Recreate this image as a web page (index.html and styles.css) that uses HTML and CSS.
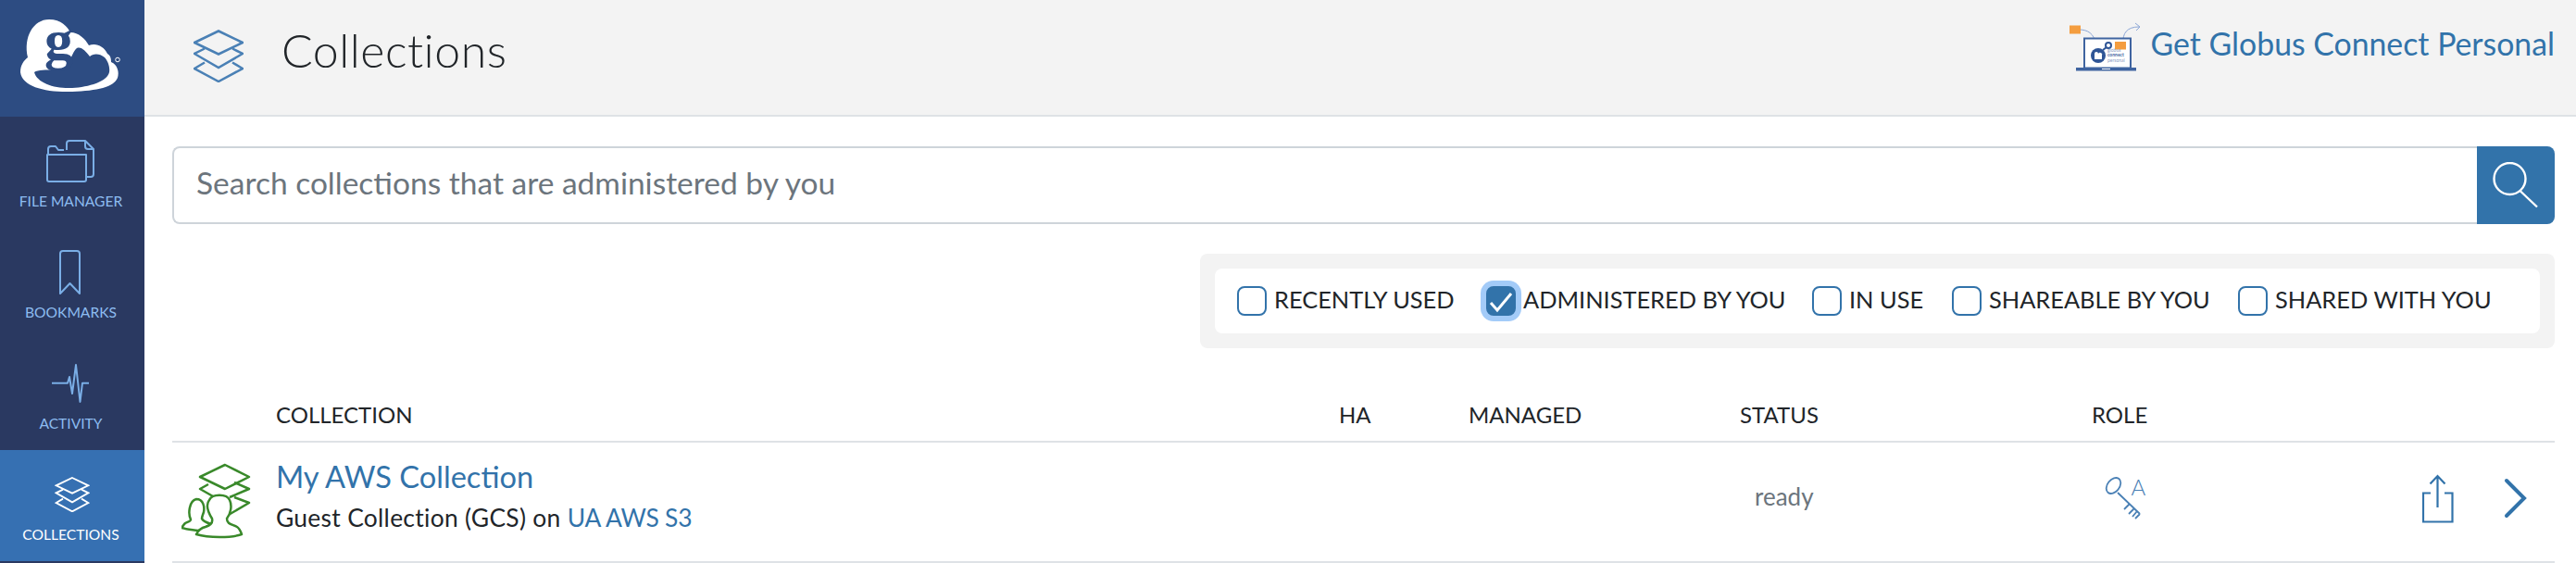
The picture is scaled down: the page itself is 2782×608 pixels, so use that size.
FILE: index.html
```html
<!DOCTYPE html>
<html lang="en">
<head>
<meta charset="utf-8">
<title>Collections</title>
<link rel="stylesheet" href="styles.css">
</head>
<body>
<svg class="defs" width="0" height="0" aria-hidden="true">
  <symbol id="stack" viewBox="0 0 54 57">
    <path d="M27 1.5L53 14 27 26.5 1 14Z"/>
    <path d="M12 20.5L1 26 27 41 53 26 42 20.5"/>
    <path d="M12 35.5L1 42 27 56 53 42 42 35.5"/>
  </symbol>
</svg>
<div class="app">
  <aside class="sidebar">
    <div class="brand">
      <svg class="brand-logo" viewBox="0 0 156 126" width="156" height="126">
        <path class="cloud" d="M30 62C25 40 36 21 53 21C66 21 73 29 76 35C85 35 92 42 96 49C104 46 112 50 116 58C120 60 120 65 120 67C127 70 129 78 127 84C123 94 105 98 78 99C50 100 24 94 22 78C22 70 26 65 30 62Z"/>
        <path class="cloud-hole" d="M37 78C41 75 50 76 58 75C68 75 72 72 74 68C77 62 80 54 83 52C88 50 92 55 97 61C100 58 107 57 113 62C117 66 119 74 118 78C116 88 96 94 78 95C60 96 40 90 37 78Z"/>
        <text class="logo-g" x="48" y="64">g</text>
        <circle class="reg" cx="127" cy="64.5" r="2.3"/>
      </svg>
    </div>
    <nav class="nav">
      <a class="nav-item">
        <svg class="nav-icon" viewBox="48 144 60 60" width="60" height="60">
          <path d="M52 167V161a3 3 0 0 1 3-3H60l3 4H69M51 167H93V194a2 2 0 0 1-2 2H53a2 2 0 0 1-2-2Z"/>
          <path d="M72 162V155a3 3 0 0 1 3-3H92l9 9V188a3 3 0 0 1-3 3H93M92 152V158a3 3 0 0 0 3 3H101"/>
        </svg>
        <span class="nav-label">FILE MANAGER</span>
      </a>
      <a class="nav-item">
        <svg class="nav-icon" viewBox="48 264 60 60" width="60" height="60">
          <path d="M65 317V274a3 3 0 0 1 3-3H83a3 3 0 0 1 3 3V317L75.500 306Z"/>
        </svg>
        <span class="nav-label">BOOKMARKS</span>
      </a>
      <a class="nav-item">
        <svg class="nav-icon" viewBox="48 384 60 60" width="60" height="60">
          <path d="M56 413.700H73L75 407 78 425 82 394 86.500 434 89 413.700H96"/>
        </svg>
        <span class="nav-label">ACTIVITY</span>
      </a>
      <a class="nav-item nav-item-active">
        <span class="nav-stack-box"><svg class="nav-stack"><use href="#stack"/></svg></span>
        <span class="nav-label">COLLECTIONS</span>
      </a>
    </nav>
  </aside>
  <main class="main">
    <header class="topbar">
      <svg class="title-icon"><use href="#stack"/></svg>
      <h1 class="title">Collections</h1>
      <a class="gcp">
        <svg class="gcp-art" viewBox="2236 24 78 54" width="78" height="54">
          <path class="gcp-arrow" d="M2246 32C2256 32 2262 36 2265 48M2261 45L2265 49 2268 45M2294 47C2293 36 2298 29 2311 29M2307 25L2312 29 2308 33"/>
          <rect class="gcp-screen" x="2252" y="41.500" width="50" height="32"/>
          <rect class="gcp-base" x="2243" y="73" width="65" height="3.500"/>
          <rect class="gcp-slot" x="2271" y="74" width="9" height="1"/>
          <rect class="gcp-folder" x="2236" y="27.500" width="12" height="9"/>
          <rect class="gcp-folder" x="2285" y="45" width="12" height="8.500"/>
          <circle class="gcp-dot" cx="2267" cy="60" r="8"/>
          <circle class="gcp-ring" cx="2278" cy="49" r="3"/>
          <path class="gcp-link" d="M2272 54L2276 51"/>
          <path class="gcp-cloud" d="M2263 64V58a2 2 0 0 1 4 0a2 2 0 0 1 4 2v4Z"/>
          <text class="gcp-small" x="2277" y="56">globus</text>
          <text class="gcp-small gcp-strong" x="2277" y="61">connect</text>
          <text class="gcp-small" x="2277" y="67">personal</text>
        </svg>
        <span class="gcp-text">Get Globus Connect Personal</span>
      </a>
    </header>
    <section class="content">
      <form class="search">
        <input class="search-input" type="text" placeholder="Search collections that are administered by you">
        <button class="search-btn" type="button" aria-label="Search">
          <svg viewBox="0 0 50 50" width="50" height="50"><circle cx="18.500" cy="18" r="17"/><path d="M29.500 31L48 48.500"/></svg>
        </button>
      </form>
      <div class="filters">
        <div class="filters-inner">
          <label class="filter"><span class="box"></span><span class="filter-text">RECENTLY USED</span></label>
          <label class="filter"><span class="box box-on"><svg viewBox="0 0 32 32" width="32" height="32"><path d="M5 18L12 26 27 8"/></svg></span><span class="filter-text">ADMINISTERED BY YOU</span></label>
          <label class="filter"><span class="box"></span><span class="filter-text">IN USE</span></label>
          <label class="filter"><span class="box"></span><span class="filter-text">SHAREABLE BY YOU</span></label>
          <label class="filter"><span class="box"></span><span class="filter-text">SHARED WITH YOU</span></label>
        </div>
      </div>
      <div class="table">
        <div class="grid thead">
          <span></span>
          <span>COLLECTION</span>
          <span>HA</span>
          <span>MANAGED</span>
          <span>STATUS</span>
          <span>ROLE</span>
          <span></span>
        </div>
        <div class="grid trow">
          <span class="cell-icon">
            <svg class="guest-icon" viewBox="196 500 75 82" width="75" height="82">
              <path d="M243 502L269 515 243 528 216 515Z"/>
              <path d="M225 523L216 528 230 536M253 521L269 528 248 537"/>
              <path d="M253 537L269 543 245 557"/>
              <path class="fill" d="M206 561C203 555 204 541 212 539C220 539 221 548 220 553C219 556 218 558 218 560C219 563 225 565 228 566L214 573C208 572 202 572 196 570C197 569 198 567 200 565C204 563 206 563 206 561Z"/>
              <path class="fill" d="M229 560C224 552 222 545 226 540C229 533 245 533 248 540C251 546 249 555 245 560C245 566 250 566 256 569C259 571 260 574 261 577C250 581 225 581 212 577C214 573 217 570 222 569C228 567 230 564 229 560Z"/>
            </svg>
          </span>
          <div class="cell-name">
            <a class="name">My AWS Collection</a>
            <div class="sub">Guest Collection (GCS) on <a class="sub-link">UA AWS S3</a></div>
          </div>
          <span></span>
          <span></span>
          <span class="status">ready</span>
          <span class="cell-role">
            <svg class="role-icon" viewBox="2272 514 50 48" width="50" height="48">
              <ellipse cx="2282.500" cy="524.500" rx="6.500" ry="9.500" transform="rotate(38 2282.500 524.500)"/>
              <path d="M2287 532L2311 555M2305 549L2299 555M2308 552L2303 558M2300 544L2294 550M2311 555L2306 560"/>
              <text class="role-a" x="2301.500" y="535">A</text>
            </svg>
          </span>
          <span class="cell-actions">
            <svg class="share-icon" viewBox="2616 512 34 53" width="34" height="53">
              <path d="M2625 532.500H2617V563.500H2648.500V532.500H2640M2632.500 548V514M2624.500 522.500L2632.500 514 2640.500 522.500"/>
            </svg>
            <svg class="chevron" viewBox="2704 516 26 44" width="26" height="44">
              <path d="M2707 519L2726 538 2707 557"/>
            </svg>
          </span>
        </div>
      </div>
    </section>
  </main>
</div>
</body>
</html>
```

FILE: styles.css
```css
* { box-sizing: border-box; }
html, body { margin: 0; padding: 0; height: 100%; }
body {
  font-family: "Lato", "Liberation Sans", sans-serif;
  color: #212529;
  background: #fff;
  overflow: hidden;
}
.defs { position: absolute; }
.app { display: flex; width: 2782px; height: 608px; overflow: hidden; }

/* sidebar */
.sidebar { flex: 0 0 156px; background: #2a3961; }
.brand { height: 126px; background: #2d4c82; }
.brand-logo { display: block; }
.cloud { fill: #fff; }
.cloud-hole { fill: #2d4c82; }
.logo-g { font-family: "Liberation Serif", serif; font-weight: 700; font-size: 62px; fill: #2d4c82; }
.reg { fill: none; stroke: #fff; stroke-width: 1; }
.nav { display: flex; flex-direction: column; }
.nav-item { height: 120px; padding-top: 18px; display: flex; flex-direction: column; align-items: center; color: #8dbcf0; }
.nav-item-active { background: #3670b2; color: #fff; }
.nav-icon { display: block; fill: none; stroke: #7aaee6; stroke-width: 2; stroke-linejoin: round; }
.nav-stack-box { height: 60px; display: flex; align-items: center; }
.nav-stack { display: block; width: 38px; height: 38px; fill: none; stroke: #fff; stroke-width: 2.800; }
.nav-label { margin: 3px 3px 0 0; font-size: 15.600px; line-height: 20px; white-space: nowrap; }

/* top bar */
.main { flex: 1; min-width: 0; display: flex; flex-direction: column; }
.topbar { flex: 0 0 126px; display: flex; align-items: flex-start; background: #f3f3f3; border-bottom: 2px solid #dee2e6; padding: 0 23px 0 53px; }
.title-icon { flex: 0 0 54px; width: 54px; height: 57px; margin-top: 32px; fill: none; stroke: #4a80b5; stroke-width: 2.500; }
.title { margin: 24px 0 0 41px; font-size: 50px; font-weight: 300; letter-spacing: 0.5px; line-height: 60px; color: #212529; }
.gcp { margin-left: auto; display: flex; align-items: flex-start; padding-top: 24px; color: #3273aa; }
.gcp-art { display: block; }
.gcp-text { margin: 3px 0 0 10px; font-size: 33.800px; line-height: 40px; white-space: nowrap; }
.gcp-arrow { fill: none; stroke: #8ba6d6; stroke-width: 1; }
.gcp-screen { fill: #fff; stroke: #3f64a0; stroke-width: 2; }
.gcp-base { fill: #3f64a0; }
.gcp-slot { fill: #fff; }
.gcp-folder { fill: #f49d3f; }
.gcp-dot { fill: #2f5596; }
.gcp-ring { fill: #fff; stroke: #2f5596; stroke-width: 2; }
.gcp-link { stroke: #2f5596; stroke-width: 2; }
.gcp-cloud { fill: #fff; }
.gcp-small { font-size: 5px; fill: #8a9cc4; }
.gcp-strong { fill: #3f64a0; font-weight: 700; }

/* content */
.content { flex: 1; padding: 32px 23px 0 30px; display: flex; flex-direction: column; }
.search { display: flex; height: 84px; }
.search-input { flex: 1; min-width: 0; height: 84px; padding: 0 24px 6px; border: 2px solid #ced4da; border-right: 0; border-radius: 8px 0 0 8px; font: 400 33.500px "Lato", sans-serif; color: #495057; background: #fff; outline: 0; }
.search-input::placeholder { color: #6c757d; opacity: 1; }
.search-btn { flex: 0 0 84px; width: 84px; padding: 0; border: 0; border-radius: 0 8px 8px 0; background: #3273aa; display: flex; align-items: center; justify-content: center; }
.search-btn svg { fill: none; stroke: #fff; stroke-width: 2.400; }

.filters { align-self: flex-end; width: 1463px; height: 102px; margin-top: 32px; padding: 16px; background: #f3f3f3; border-radius: 8px; }
.filters-inner { height: 70px; padding-left: 24px; display: grid; grid-template-columns: 269px 352px 151px 309px auto; align-items: center; background: #fff; border-radius: 8px; }
.filter { display: flex; align-items: center; gap: 8px; font-size: 25.400px; white-space: nowrap; color: #212529; }
.filter-text { line-height: 30px; margin-top: -4px; }
.box { flex: 0 0 32px; width: 32px; height: 32px; border: 2px solid #3273aa; border-radius: 8px; background: #fff; }
.box-on { background: #3273aa; box-shadow: 0 0 0 6px #a3cbf8; }
.box-on svg { display: block; margin: -2px; fill: none; stroke: #fff; stroke-width: 3; }

.grid { display: grid; grid-template-columns: 112px 1148px 140px 293px 380px 357px 143px; }
.thead { height: 102px; align-items: end; padding-bottom: 12px; border-bottom: 2px solid #dee2e6; font-size: 24px; line-height: 32px; color: #212529; }
.trow { height: 130px; align-items: start; border-bottom: 2px solid #dee2e6; }
.cell-icon { padding: 22px 0 0 10px; }
.guest-icon { display: block; fill: none; stroke: #39892a; stroke-width: 2.500; stroke-linejoin: round; }
.guest-icon .fill { fill: #fff; }
.cell-name { padding-top: 17px; }
.name { display: block; font-size: 32.600px; line-height: 40px; color: #3273aa; }
.sub { margin-top: 7px; font-size: 26.400px; letter-spacing: 0.3px; line-height: 34px; color: #212529; }
.sub-link { color: #3273aa; letter-spacing: -0.2px; }
.status { padding: 42px 0 0 16px; font-size: 26px; line-height: 32px; color: #6c757d; }
.cell-role { padding: 36px 0 0 13px; }
.role-icon { display: block; fill: none; stroke: #4a80b5; stroke-width: 1.800; }
.role-a { font-size: 24px; font-weight: 300; fill: #4a80b5; stroke: none; }
.cell-actions { display: flex; align-items: flex-start; padding-top: 34px; }
.share-icon { display: block; fill: none; stroke: #3273aa; stroke-width: 2.200; }
.chevron { display: block; margin: 4px 0 0 54px; fill: none; stroke: #3273aa; stroke-width: 4; stroke-linecap: round; }
```
